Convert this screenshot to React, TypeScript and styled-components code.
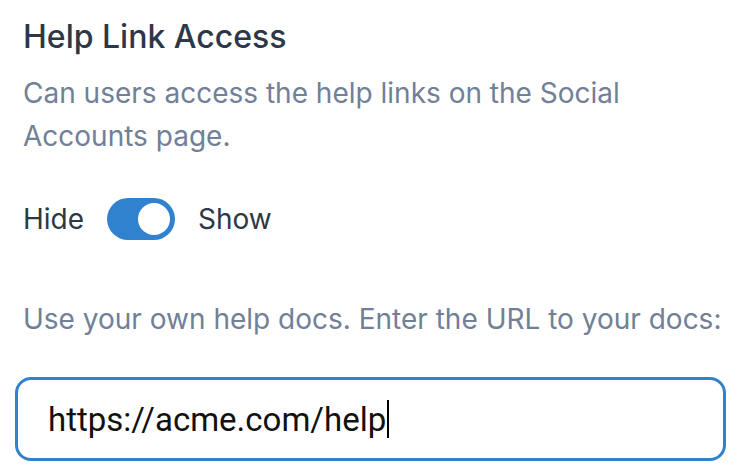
import React from "react";
import styled, { createGlobalStyle } from "styled-components";

const Global = createGlobalStyle`
  html, body { margin: 0; padding: 0; background: #ffffff; }
  body { font-family: Inter, "Noto Sans", sans-serif; }
`;

const Page = styled.div`
  width: 736px;
  height: 476px;
  box-sizing: border-box;
  padding: 17px 10px 0 23px;
  display: flex;
  flex-direction: column;
`;

const Title = styled.h2`
  margin: 0;
  font-size: 32px;
  font-weight: 500;
  line-height: 40px;
  color: #2d3748;
`;

const Description = styled.p`
  margin: 15px 0 0;
  font-size: 28px;
  line-height: 43px;
  color: #718096;
  max-width: 660px;
`;

const ToggleRow = styled.div`
  display: flex;
  align-items: center;
  gap: 23px;
  margin-top: 40px;
  font-size: 28px;
  color: #2d3748;
`;

const Track = styled.span<{ $on: boolean }>`
  width: 68px;
  height: 42px;
  border-radius: 21px;
  background: ${(p) => (p.$on ? "#3182ce" : "#cbd5e0")};
  display: flex;
  align-items: center;
  justify-content: ${(p) => (p.$on ? "flex-end" : "flex-start")};
  padding: 0 5px;
  box-sizing: border-box;
`;

const Knob = styled.span`
  width: 32px;
  height: 32px;
  border-radius: 50%;
  background: #ffffff;
`;

const Hint = styled.p`
  margin: 59px 0 0;
  font-size: 28px;
  line-height: 40px;
  color: #718096;
  white-space: nowrap;
`;

const InputBox = styled.div`
  margin: 38px 0 0 -8px;
  width: 711px;
  height: 84px;
  box-sizing: border-box;
  border: 3px solid #3182ce;
  border-radius: 16px;
  display: flex;
  align-items: center;
  padding: 0 30px;
`;

const InputText = styled.span`
  font-family: Roboto, "Liberation Sans", sans-serif;
  font-size: 33px;
  color: #111111;
`;

const Caret = styled.span`
  display: inline-block;
  width: 2px;
  height: 38px;
  background: #000;
  margin-left: 1px;
`;

export default function App() {
  return (
    <>
      <Global />
      <Page>
        <Title>Help Link Access</Title>
        <Description>
          Can users access the help links on the Social Accounts page.
        </Description>
        <ToggleRow>
          <span>Hide</span>
          <Track $on>
            <Knob />
          </Track>
          <span>Show</span>
        </ToggleRow>
        <Hint>Use your own help docs. Enter the URL to your docs:</Hint>
        <InputBox>
          <InputText>https://acme.com/help</InputText>
          <Caret />
        </InputBox>
      </Page>
    </>
  );
}
